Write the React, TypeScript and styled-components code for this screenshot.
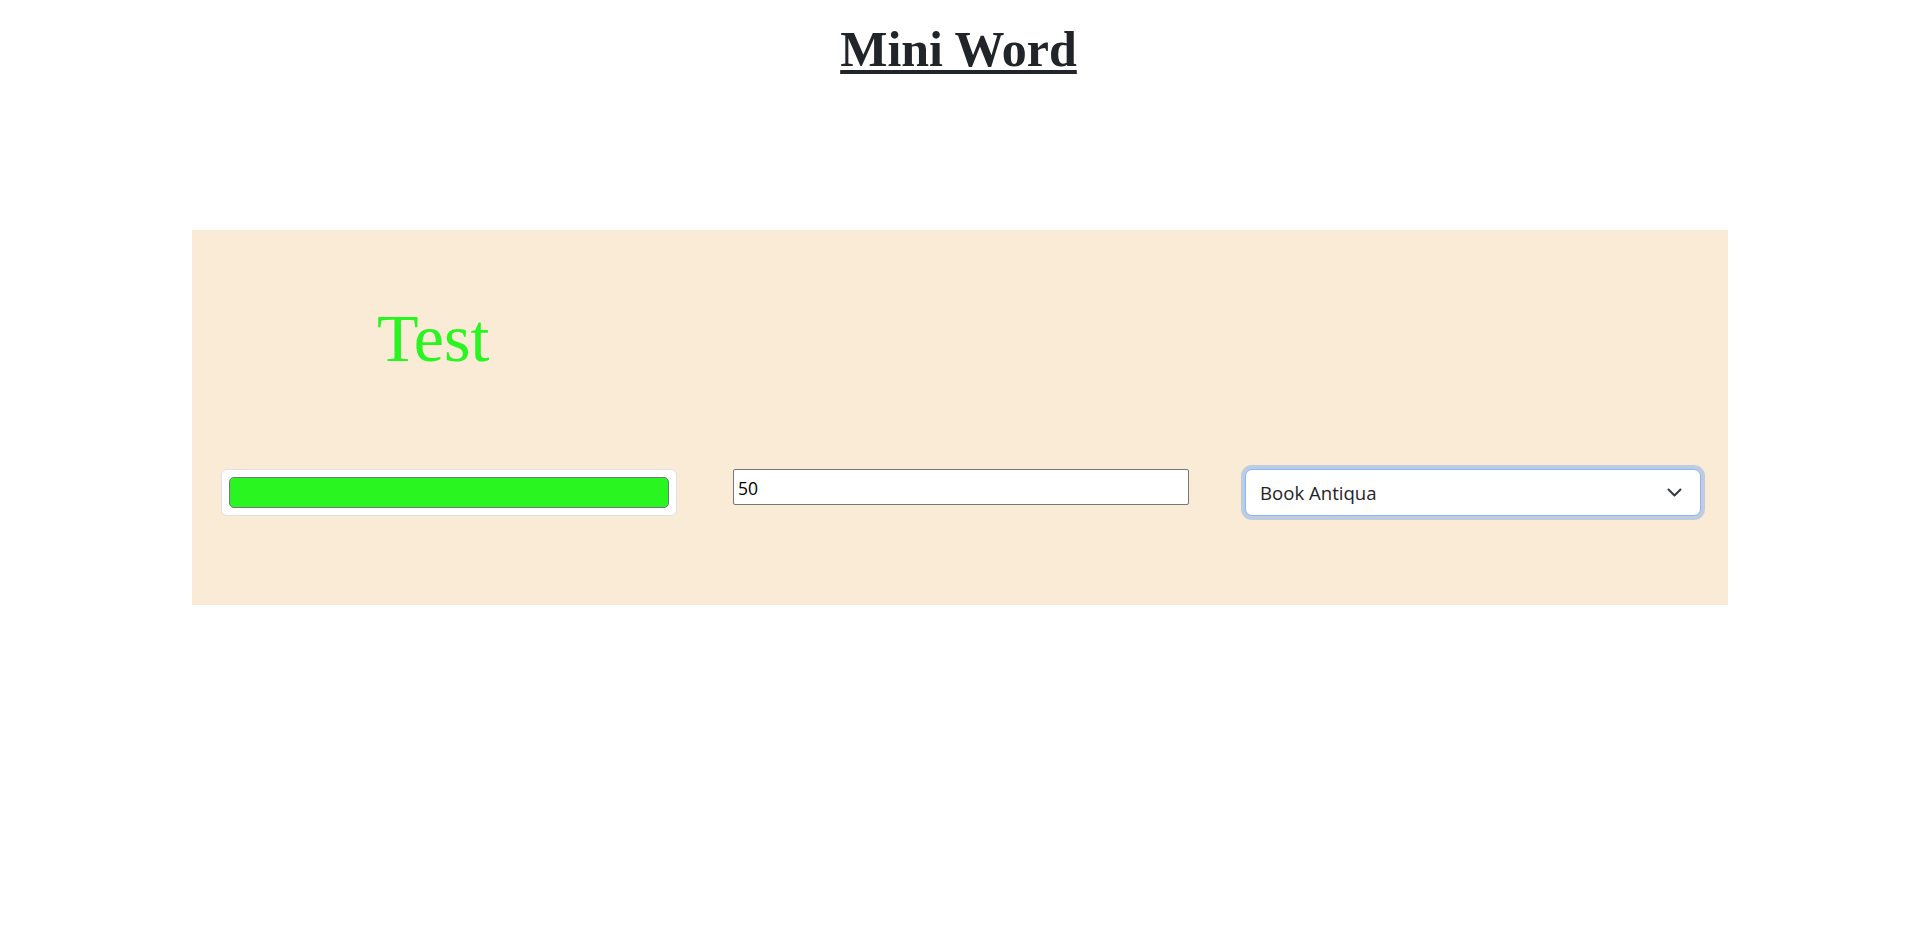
import React from "react";
import styled, { createGlobalStyle } from "styled-components";

const GlobalStyle = createGlobalStyle`
  html, body {
    margin: 0;
    padding: 0;
    background: #ffffff;
  }
  body {
    font-family: "Open Sans", "Noto Sans", sans-serif;
    color: #212529;
  }
`;

const Page = styled.div`
  display: flex;
  flex-direction: column;
  min-height: 932px;
`;

const Title = styled.h1`
  margin: 19px 0 0;
  text-align: center;
  font-family: "Liberation Serif", "Times New Roman", serif;
  font-weight: 700;
  font-size: 50px;
  line-height: 60px;
  color: #212529;
  text-decoration: underline;
  text-decoration-thickness: 4px;
  text-underline-offset: 4px;
`;

const Panel = styled.section`
  margin: 151px 189px 0 192px;
  background: #faebd7;
  padding: 74px 27px 89px 29px;
  display: flex;
  flex-direction: column;
`;

const Sample = styled.p<{ $color: string }>`
  margin: 0 0 0 156px;
  font-family: "Liberation Serif", "Times New Roman", serif;
  font-size: 68px;
  line-height: 1;
  color: ${(p) => p.$color};
`;

const Controls = styled.div`
  margin-top: 97px;
  display: grid;
  grid-template-columns: repeat(3, 1fr);
  column-gap: 56px;
  align-items: start;
`;

const ColorField = styled.div`
  box-sizing: border-box;
  height: 47px;
  padding: 7px;
  background: #ffffff;
  border: 1px solid #dee2e6;
  border-radius: 6px;
  display: flex;
`;

const Swatch = styled.div<{ $color: string }>`
  flex: 1;
  box-sizing: border-box;
  border: 1px solid #767676;
  border-radius: 5px;
  background: ${(p) => p.$color};
`;

const SizeInput = styled.div`
  box-sizing: border-box;
  height: 36px;
  border: 1px solid #767676;
  border-radius: 2px;
  background: #ffffff;
  padding: 1px 4px 0;
  display: flex;
  align-items: center;
  font-family: "Open Sans", "Noto Sans", sans-serif;
  font-size: 17.5px;
  color: #000000;
`;

const FontSelect = styled.div`
  box-sizing: border-box;
  height: 47px;
  border: 1px solid #86b7fe;
  border-radius: 7px;
  background: #ffffff;
  box-shadow: 0 0 0 4px rgba(13, 110, 253, 0.25);
  padding: 0 18px 0 14px;
  display: flex;
  align-items: center;
  justify-content: space-between;
  font-family: "Open Sans", "Noto Sans", sans-serif;
  font-size: 18.6px;
  color: #212529;
`;

const Chevron = () => (
  <svg width="15" height="9" viewBox="0 0 15 9" fill="none">
    <path d="M1.5 1.5l6 6 6-6" stroke="#343a40" strokeWidth="2" strokeLinecap="round" strokeLinejoin="round" />
  </svg>
);

export default function App() {
  const color = "#29f520";
  return (
    <Page>
      <GlobalStyle />
      <Title>Mini Word</Title>
      <Panel>
        <Sample $color={color}>Test</Sample>
        <Controls>
          <ColorField>
            <Swatch $color={color} />
          </ColorField>
          <SizeInput>50</SizeInput>
          <FontSelect>
            <span>Book Antiqua</span>
            <Chevron />
          </FontSelect>
        </Controls>
      </Panel>
    </Page>
  );
}
